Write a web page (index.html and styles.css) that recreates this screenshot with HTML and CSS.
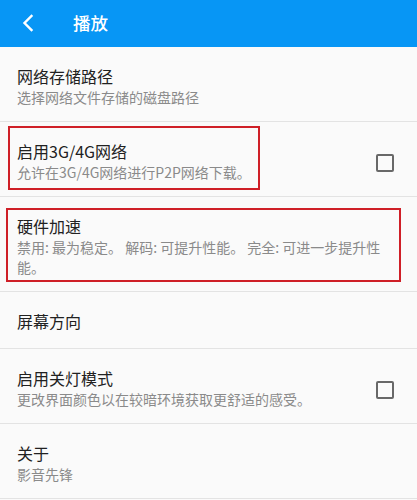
FILE: index.html
```html
<!DOCTYPE html>
<html lang="zh-CN">
<head>
<meta charset="utf-8">
<title>播放</title>
<link rel="stylesheet" href="styles.css">
</head>
<body>
<header class="appbar">
  <svg class="back" width="14" height="18" viewBox="0 0 14 18"><path d="M10.5 2 L3.5 9 L10.5 16" fill="none" stroke="#fff" stroke-width="2.4" stroke-linecap="square"/></svg>
  <h1 class="title">播放</h1>
</header>
<main class="list">
  <div class="row">
    <div class="text">
      <div class="t">网络存储路径</div>
      <div class="s">选择网络文件存储的磁盘路径</div>
    </div>
  </div>
  <div class="row">
    <div class="text">
      <div class="t">启用3G/4G网络</div>
      <div class="s">允许在3G/4G网络进行P2P网络下载。</div>
    </div>
    <span class="check"></span>
    <span class="mark mark1"></span>
  </div>
  <div class="row">
    <div class="text narrow">
      <div class="t">硬件加速</div>
      <div class="s">禁用: 最为稳定。 解码: 可提升性能。 完全: 可进一步提升性能。</div>
    </div>
    <span class="mark mark2"></span>
  </div>
  <div class="row single">
    <div class="text">
      <div class="t">屏幕方向</div>
    </div>
  </div>
  <div class="row">
    <div class="text">
      <div class="t">启用关灯模式</div>
      <div class="s">更改界面颜色以在较暗环境获取更舒适的感受。</div>
    </div>
    <span class="check"></span>
  </div>
  <div class="row">
    <div class="text">
      <div class="t">关于</div>
      <div class="s">影音先锋</div>
    </div>
  </div>
</main>
</body>
</html>
```
FILE: styles.css
```css
* { box-sizing: border-box; }
html, body { margin: 0; padding: 0; }
body {
  background: #fafafa;
  font-family: "Noto Sans CJK SC", "Noto Sans", Roboto, sans-serif;
  width: 417px;
  height: 500px;
  overflow: hidden;
}
.appbar {
  height: 47px;
  background: #0796f5;
  display: flex;
  align-items: center;
  padding-left: 21px;
}
.back { display: block; margin-top: -1px; }
.title {
  margin: 0 0 0 38px;
  color: #fff;
  font-size: 17.5px;
  font-weight: 500;
  line-height: 22px;
  margin-top: -2px;
}
.list { display: flex; flex-direction: column; }
.row {
  position: relative;
  display: flex;
  align-items: center;
  padding: 18px 16px 14px 17px;
  border-bottom: 1px solid #e3e3e3;
}
.row.single { padding-top: 18px; padding-bottom: 16px; }
.text { flex: 1; min-width: 0; }
.text.narrow { padding-right: 2px; }
.t {
  font-size: 16px;
  line-height: 22px;
  color: #212121;
}
.s {
  font-size: 14px;
  line-height: 20px;
  color: #8a8a8a;
}
.check {
  width: 18px;
  height: 18px;
  border: 2px solid #686868;
  border-radius: 2px;
  margin-right: 7px;
  margin-top: 4px;
  flex: none;
}
.mark {
  position: absolute;
  border: 2px solid #cf1f27;
  pointer-events: none;
}
.mark1 { left: 8px; top: 4px; width: 252px; height: 64px; }
.mark2 { left: 6px; top: 11px; width: 395px; height: 74px; }
```
